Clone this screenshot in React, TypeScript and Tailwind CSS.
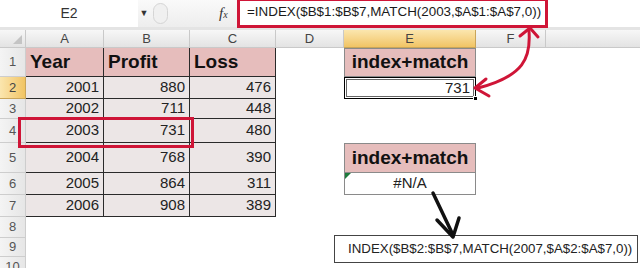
const font = { fontFamily: '"Liberation Sans", Arial, sans-serif' };

const colHdr =
  "flex items-center justify-center border-r border-b border-[#c9c9c9] bg-gradient-to-b from-[#f7f7f7] to-[#e3e3e3] text-[13px] text-[#444]";
const colHdrOn =
  "flex items-center justify-center border-r border-b border-[#c9a55a] bg-gradient-to-b from-[#fbe6ae] to-[#f1c463] text-[13px] text-[#444]";
const rowHdr =
  "flex items-center justify-center border-r border-b border-[#cdcdcd] bg-gradient-to-r from-[#f4f4f4] to-[#e6e6e6] text-[13px] text-[#555]";
const rowHdrOn =
  "flex items-center justify-center border-r border-b border-[#c9a55a] bg-gradient-to-r from-[#fbe6ae] to-[#f1c463] text-[13px] text-[#444]";
const headCell =
  "flex items-center pl-1 border-r border-b border-[#2a2a2a] bg-[#e6bdbc] text-[19px] font-bold text-[#111]";
const dataCell =
  "flex items-center justify-end pr-1 border-r border-b border-[#2a2a2a] bg-[#ece6e6] text-[15px] text-[#222]";

const rows = [
  { n: 1, a: "Year", b: "Profit", c: "Loss", head: true },
  { n: 2, a: "2001", b: "880", c: "476" },
  { n: 3, a: "2002", b: "711", c: "448" },
  { n: 4, a: "2003", b: "731", c: "480" },
  { n: 5, a: "2004", b: "768", c: "390" },
  { n: 6, a: "2005", b: "864", c: "311" },
  { n: 7, a: "2006", b: "908", c: "389" },
];

function ECell({ n }: { n: number }) {
  if (n === 1 || n === 5) {
    return (
      <div className="flex items-center justify-center border border-[#8a8a8a] bg-[#e6bdbc] text-[19px] font-bold text-[#111]">
        index+match
      </div>
    );
  }
  if (n === 2) {
    return (
      <div className="relative flex items-center justify-end pr-[5px] border border-black bg-white text-[15px] text-[#222] shadow-[inset_0_0_0_1px_#fff,inset_0_0_0_2px_#666]">
        731
        <span className="absolute -right-[3px] -bottom-[3px] h-[5px] w-[5px] bg-black border border-white" />
      </div>
    );
  }
  if (n === 6) {
    return (
      <div className="relative flex items-center justify-center border-x border-b border-[#8a8a8a] bg-white text-[15px] text-[#222]">
        <span className="absolute left-0 top-0 h-0 w-0 border-t-[6px] border-r-[6px] border-t-[#1e7a3c] border-r-transparent" />
        #N/A
      </div>
    );
  }
  return <div className="bg-white" />;
}

export default function App() {
  return (
    <div className="relative h-[268px] w-[640px] overflow-hidden bg-white" style={font}>
      {/* formula bar */}
      <div className="flex h-[27px] items-center bg-gradient-to-b from-[#fafafa] to-[#ededed]">
        <div className="flex h-full w-[138px] items-center justify-center bg-white text-[14px] text-[#333]">
          E2
        </div>
        <div className="flex w-[12px] justify-center text-[9px] text-[#333]">▼</div>
        <div className="ml-[3px] h-[21px] w-[15px] rounded-full border border-[#d5d5d5] bg-[#f0f0f0]" />
        <div className="flex-1" />
        <div className="mr-[4px] w-[14px] text-[15px] italic text-[#333]" style={{ fontFamily: '"Liberation Serif", serif' }}>
          f<span className="text-[10px]">x</span>
        </div>
        <div className="-mt-[2px] flex h-[30px] w-[311px] items-center border-[3px] border-[#cf1537] bg-white pl-[7px] text-[13.4px] text-[#1a1a1a]">
          =INDEX($B$1:$B$7,MATCH(2003,$A$1:$A$7,0))
        </div>
        <div className="h-full w-[92px] bg-white" />
      </div>
      <div className="h-[3px] bg-[#e4e4e4]" />

      {/* sheet grid */}
      <div className="grid grid-cols-[26px_78px_86px_86px_68px_132px_70px_1fr] grid-rows-[18px_29px_22px_20px_24px_30px_22px_22px_21px_19px_21px]">
        <div className="relative border-r border-b border-[#c9c9c9] bg-gradient-to-b from-[#f7f7f7] to-[#e3e3e3]">
          <span className="absolute right-[3px] bottom-[3px] h-0 w-0 border-b-[9px] border-l-[9px] border-b-[#c4c4c4] border-l-transparent" />
        </div>
        <div className={colHdr}>A</div>
        <div className={colHdr}>B</div>
        <div className={colHdr}>C</div>
        <div className={colHdr}>D</div>
        <div className={colHdrOn}>E</div>
        <div className={colHdr}>F</div>
        <div className="border-b border-[#c9c9c9] bg-gradient-to-b from-[#f7f7f7] to-[#e3e3e3]" />

        {rows.map((r) => (
          <div key={r.n} className="contents">
            <div className={r.n === 2 ? rowHdrOn : rowHdr}>{r.n}</div>
            <div className={r.head ? headCell : dataCell}>{r.a}</div>
            <div className={r.head ? headCell : dataCell}>{r.b}</div>
            <div className={r.head ? headCell : dataCell}>{r.c}</div>
            <div className="bg-white" />
            <ECell n={r.n} />
            <div className="bg-white" />
            <div className="bg-white" />
          </div>
        ))}

        {[8, 9, 10].map((n) => (
          <div key={n} className="contents">
            <div className={rowHdr}>{n}</div>
            <div className="col-span-7 bg-white" />
          </div>
        ))}
      </div>

      {/* highlight around A4:B4 */}
      <div className="absolute left-[18px] top-[117px] h-[31px] w-[176px] border-[3px] border-[#cf1537]" />

      {/* note box */}
      <div className="absolute left-[334px] top-[235px] flex h-[28px] w-[304px] items-center border border-[#444] bg-white pl-[13px] text-[13.3px] text-[#222]">
        INDEX($B$2:$B$7,MATCH(2007,$A$2:$A$7,0))
      </div>

      {/* arrows */}
      <svg className="pointer-events-none absolute inset-0" width="640" height="268" viewBox="0 0 640 268">
        <g fill="none" stroke="#cf1537" strokeWidth="3" strokeLinecap="round" strokeLinejoin="round">
          <path d="M529 31 C531 58 524 76 478 88" />
          <path d="M520 36 L530 28 L538 37" />
          <path d="M486 79 L475 88 L489 96" />
        </g>
        <g fill="none" stroke="#111" strokeWidth="3.5" strokeLinecap="round" strokeLinejoin="round">
          <path d="M433 193 L453 235" />
          <path d="M437 220 L453 237 L459 218" />
        </g>
      </svg>
    </div>
  );
}
